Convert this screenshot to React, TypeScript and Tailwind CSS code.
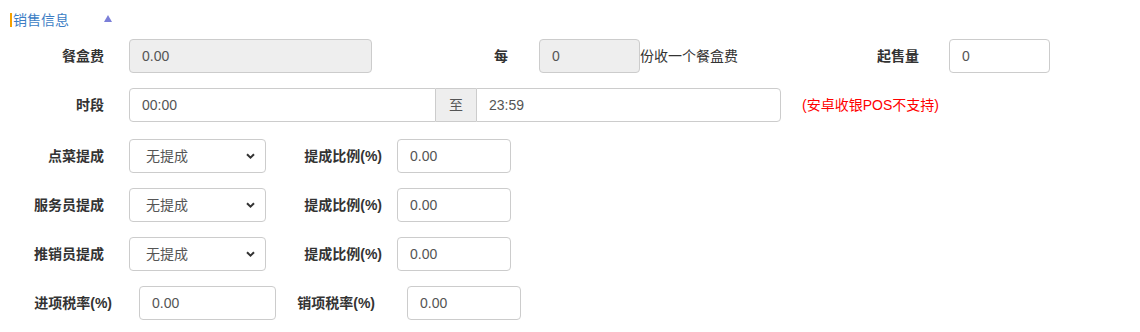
import React from "react";

const font = { fontFamily: '"Liberation Sans", "Noto Sans CJK SC", sans-serif' };

const inputBase =
  "h-[34px] border border-[#ccc] rounded-[4px] px-3 text-[14px] text-[#555] outline-none";

function Label({ w, children }: { w: string; children: React.ReactNode }) {
  return (
    <div className={`${w} shrink-0 text-right text-[14px] font-bold text-[#333]`}>{children}</div>
  );
}

function Input({ w, value, disabled }: { w: string; value: string; disabled?: boolean }) {
  return (
    <input
      readOnly
      value={value}
      className={`${inputBase} ${w} shrink-0 ${disabled ? "bg-[#eee]" : "bg-white"}`}
      style={font}
    />
  );
}

function Select({ w }: { w: string }) {
  return (
    <div className={`relative ${w} shrink-0 h-[34px]`}>
      <div
        className={`${inputBase} w-full flex items-center bg-white`}
        style={font}
      >
        <span className="pl-[4px]">无提成</span>
      </div>
      <svg
        className="absolute right-[11px] top-[14px]"
        width="9"
        height="6"
        viewBox="0 0 9 6"
      >
        <path d="M1 1.2 L4.5 4.6 L8 1.2" fill="none" stroke="#333" strokeWidth="2" />
      </svg>
    </div>
  );
}

function CommissionRow({ label }: { label: string }) {
  return (
    <div className="flex items-center h-[34px]">
      <Label w="w-[104px]">{label}</Label>
      <div className="ml-[25px]">
        <Select w="w-[137px]" />
      </div>
      <Label w="w-[116px]">提成比例(%)</Label>
      <div className="ml-[15px]">
        <Input w="w-[114px]" value="0.00" />
      </div>
    </div>
  );
}

export default function App() {
  return (
    <div className="w-[1140px] h-[332px] bg-white relative" style={font}>
      <div className="flex items-center pt-[12px] h-[28px]">
        <div className="ml-[10px] w-[2px] h-[14px] bg-[#f5a000]" />
        <span className="ml-[1px] text-[14px] text-[#3c7dc4] leading-[16px]">销售信息</span>
        <svg className="ml-[35px] -mt-[4px]" width="8" height="7" viewBox="0 0 8 7">
          <path d="M4 0 L8 7 L0 7 Z" fill="#7b7fd8" />
        </svg>
      </div>

      <div className="mt-[11px] flex flex-col">
        {/* Row 1 */}
        <div className="flex items-center h-[34px]">
          <Label w="w-[104px]">餐盒费</Label>
          <div className="ml-[25px]">
            <Input w="w-[243px]" value="0.00" disabled />
          </div>
          <Label w="w-[136px]">每</Label>
          <div className="ml-[31px]">
            <Input w="w-[101px]" value="0" disabled />
          </div>
          <span className="text-[14px] text-[#333]">份收一个餐盒费</span>
          <Label w="w-[181px]">起售量</Label>
          <div className="ml-[30px]">
            <Input w="w-[101px]" value="0" />
          </div>
        </div>

        {/* Row 2 */}
        <div className="flex items-center h-[34px] mt-[15px]">
          <Label w="w-[104px]">时段</Label>
          <div className="ml-[25px] flex h-[34px]">
            <input
              readOnly
              value="00:00"
              className="h-[34px] w-[307px] border border-[#ccc] rounded-l-[4px] px-3 text-[14px] text-[#555] outline-none"
              style={font}
            />
            <div className="h-[34px] w-[40px] border-y border-[#ccc] bg-[#eee] flex items-center justify-center text-[14px] text-[#555]">
              至
            </div>
            <input
              readOnly
              value="23:59"
              className="h-[34px] w-[305px] border border-[#ccc] rounded-r-[4px] px-3 text-[14px] text-[#555] outline-none"
              style={font}
            />
          </div>
          <span className="ml-[21px] text-[14px] text-[#ff0000]">(安卓收银POS不支持)</span>
        </div>

        <div className="mt-[17px] flex flex-col gap-[15px]">
          <CommissionRow label="点菜提成" />
          <CommissionRow label="服务员提成" />
          <CommissionRow label="推销员提成" />
          <div className="flex items-center h-[34px]">
            <Label w="w-[112px]">进项税率(%)</Label>
            <div className="ml-[27px]">
              <Input w="w-[137px]" value="0.00" />
            </div>
            <Label w="w-[99px]">销项税率(%)</Label>
            <div className="ml-[32px]">
              <Input w="w-[114px]" value="0.00" />
            </div>
          </div>
        </div>
      </div>
    </div>
  );
}
